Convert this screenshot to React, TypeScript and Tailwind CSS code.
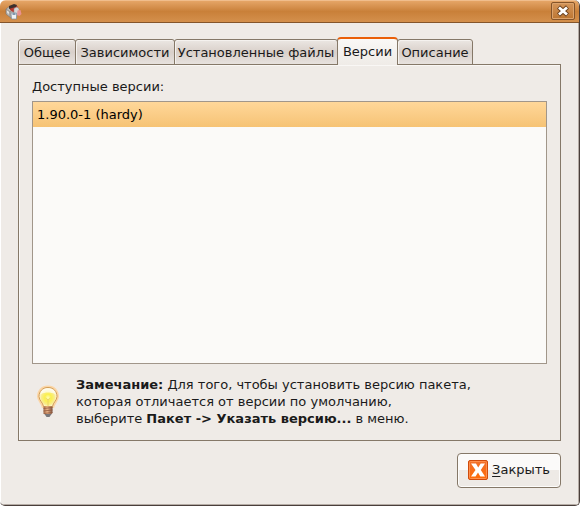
import { useState } from "react";

const tabs = [
  { name: "Общее", width: "w-[58px]" },
  { name: "Зависимости", width: "w-[100px]" },
  { name: "Установленные файлы", width: "w-[164px]" },
  { name: "Версии", width: "w-[61px]" },
  { name: "Описание", width: "w-[76px]" },
];

function PackageIcon() {
  return (
    <svg width="17" height="17" viewBox="0 0 17 17" aria-hidden="true">
      <path d="M1 6l4-3 4 4v7l-3 1-5-4z" fill="#b9b8b5" stroke="#77716c" strokeWidth=".6" />
      <path d="M1 6l4 3 4-3M5 9v5" fill="none" stroke="#8a8580" strokeWidth=".8" />
      <path d="M2 7.500l2 1.500v2l-2-1.500z" fill="#e6e5e1" />
      <path d="M5 5l6-3 2 2v4l-5 1-3-2z" fill="#b93a30" />
      <path d="M4 3l5-2 3 1-1 2-4 1-3 1z" fill="#3c302d" />
      <path d="M9 5.500l3-1.500 2 2v5l-3 2-2-2z" fill="#d6d5d4" stroke="#98928e" strokeWidth=".5" />
      <path d="M12.500 7.500l3-.5 1 4-2 2-2.500-1z" fill="#e9908f" />
      <path d="M6 10h5.500v6H6.500z" fill="#eef2f5" stroke="#7c8b9a" strokeWidth=".7" />
      <path d="M7.500 10h3v2h-3z" fill="#8298ac" />
    </svg>
  );
}

function BulbIcon() {
  return (
    <svg width="24" height="34" viewBox="0 0 24 34" aria-hidden="true">
      <defs>
        <radialGradient id="bulb-glass" cx="50%" cy="54%" r="52%">
          <stop offset="0" stopColor="#fffcb4" />
          <stop offset=".35" stopColor="#faf04e" />
          <stop offset=".7" stopColor="#f9ed8c" />
          <stop offset="1" stopColor="#fffaee" />
        </radialGradient>
        <linearGradient id="bulb-base">
          <stop offset="0" stopColor="#9a6444" />
          <stop offset=".4" stopColor="#f0b88c" />
          <stop offset="1" stopColor="#7a5140" />
        </linearGradient>
      </defs>
      <path d="M12 2C6 2 2.500 6 2.500 11.500c0 4 3.500 6 4.500 10h10c1-4 4.500-6 4.500-10C21.500 6 18 2 12 2z" fill="none" stroke="#ffcf92" strokeWidth="3" opacity=".75" />
      <path d="M12 2.500C6.500 2.500 3 6.500 3 11.500c0 4 4 6 4.500 10h9c.5-4 4.500-6 4.500-10 0-5-3.500-9-9-9z" fill="url(#bulb-glass)" stroke="#d29c55" strokeWidth="1" />
      <path d="M5 9c0-3.500 3-5.500 7-5.500S19 5.500 19 9c-4-2-10-2-14 0z" fill="#fff" opacity=".65" />
      <path d="M9.500 13l2.500 2 2.500-2M12 15v6" fill="none" stroke="#ead463" strokeWidth="1" />
      <path d="M7.500 21.500h9V28l-2 2h-5l-2-2z" fill="url(#bulb-base)" />
      <path d="M7.500 23.500l9-1M7.500 26l9-1M7.500 28.500l9-1" stroke="#93593c" strokeWidth=".8" />
      <path d="M8.500 29h7l-2 3h-3z" fill="#77777b" />
    </svg>
  );
}

function CloseIcon() {
  return (
    <svg width="22" height="22" viewBox="0 0 22 22" aria-hidden="true">
      <defs>
        <linearGradient id="close-face" x2="0" y2="1">
          <stop offset="0" stopColor="#f0702c" />
          <stop offset="1" stopColor="#ff6b06" />
        </linearGradient>
      </defs>
      <rect x="1.500" y="1.500" width="19" height="19" rx="1.500" fill="url(#close-face)" stroke="#cf4b0c" />
      <rect x="2.500" y="2.500" width="17" height="17" rx="1" fill="none" stroke="#ff8f4c" />
      <path d="M4 4.500h5l2.200 4 2.500-4H18L13.800 11l4.200 6.500h-4.700L11 13.400l-2.500 4.100H4L8.500 11z" fill="#fff" />
    </svg>
  );
}

export default function App() {
  const [active, setActive] = useState(3);
  return (
    <div className="bg-white font-['DejaVu_Sans',sans-serif] text-[13px] leading-[17px] text-[#1a1a1a]">
      <main className="flex min-h-screen flex-col overflow-hidden rounded-t-[6px] rounded-b-[5px] border-r border-b border-r-[#4a3f3b] border-b-[#4a3f3b] bg-[#efebe7]">
        <header className="flex h-[23px] shrink-0 items-center justify-between border-t border-b border-t-[#f0bd8c] border-b-[#84552b] bg-linear-to-b from-[#e5a566] via-[#c98039] to-[#d4904c] pr-1 pl-[5px]">
          <PackageIcon />
          <button aria-label="Закрыть окно" className="mb-px flex h-[18px] w-6 items-center justify-center rounded-[2px] border border-[#85542a] bg-linear-to-b from-[#d4955a] to-[#bd7631] shadow-[inset_0_0_0_1px_#dca36c]">
            <svg width="12" height="12" viewBox="0 0 12 12" aria-hidden="true">
              <path d="M1.500 2l9 8M10.500 2l-9 8" stroke="#69401f" strokeWidth="4.500" />
              <path d="M2 2.500l8 7M10 2.500l-8 7" stroke="#fff" strokeWidth="2.800" />
            </svg>
          </button>
        </header>

        <div className="flex flex-1 flex-col border-r border-b border-l border-r-[#b5aca5] border-b-[#b5aca5] border-l-white px-[17px] pt-3.5 pb-4">
          <div role="tablist" aria-label="Свойства пакета" className="relative z-10 -mb-px flex items-end">
            {tabs.map(({ name, width }, i) => (
              <button
                key={name}
                id={`tab-${i}`}
                role="tab"
                aria-selected={i === active}
                aria-controls="tab-panel"
                onClick={() => setActive(i)}
                className={`${width} flex shrink-0 justify-center whitespace-nowrap ${
                  i === active
                    ? "-ml-px h-7 items-center rounded-t-[4px] border-x border-t-2 border-x-[#857868] border-t-[#ea5f08] bg-linear-to-b from-[#faf8f6] to-[#efebe7] pb-px"
                    : "-ml-px h-[26px] items-center rounded-t-[3px] border border-[#857868] bg-linear-to-b from-[#ebe7e3] via-[#d9d0ca] to-[#e7e2de] shadow-[inset_1px_1px_0_#f5f2ef] first:ml-0"
                }`}
              >
                {name}
              </button>
            ))}
          </div>

          <section id="tab-panel" role="tabpanel" aria-labelledby={`tab-${active}`} className="flex flex-1 flex-col border border-[#857868] px-[13px] pt-[13px] pb-[13px] shadow-[inset_1px_1px_0_#f9f7f5]">
            <h2 id="versions-label">Доступные версии:</h2>
            <ul role="listbox" aria-labelledby="versions-label" className="mt-1.5 flex-1 border border-[#a1968a] bg-[#fbfaf8]">
              <li role="option" aria-selected="true" className="bg-linear-to-b from-[#ffd799] to-[#f6c375] px-1 py-1 text-black">
                1.90.0-1 (hardy)
              </li>
            </ul>
            <div className="mt-3 flex items-center gap-4">
              <div className="flex w-7 shrink-0 justify-end">
                <BulbIcon />
              </div>
              <p>
                <strong>Замечание:</strong> Для того, чтобы установить версию пакета,
                <br />
                которая отличается от версии по умолчанию,
                <br />
                выберите <strong>Пакет -&gt; Указать версию...</strong> в меню.
              </p>
            </div>
          </section>

          <footer className="mt-3 flex justify-end">
            <button className="flex h-[35px] items-center gap-[3px] rounded-[4px] border border-[#857868] bg-linear-to-b from-[#fbfaf9] from-50% to-[#eeeae6] to-50% pr-[10px] pb-0.5 pl-[9px] shadow-[inset_0_0_0_1px_#fdfcfb]">
              <CloseIcon />
              <span><u className="underline-offset-2">З</u>акрыть</span>
            </button>
          </footer>
        </div>
      </main>
    </div>
  );
}
